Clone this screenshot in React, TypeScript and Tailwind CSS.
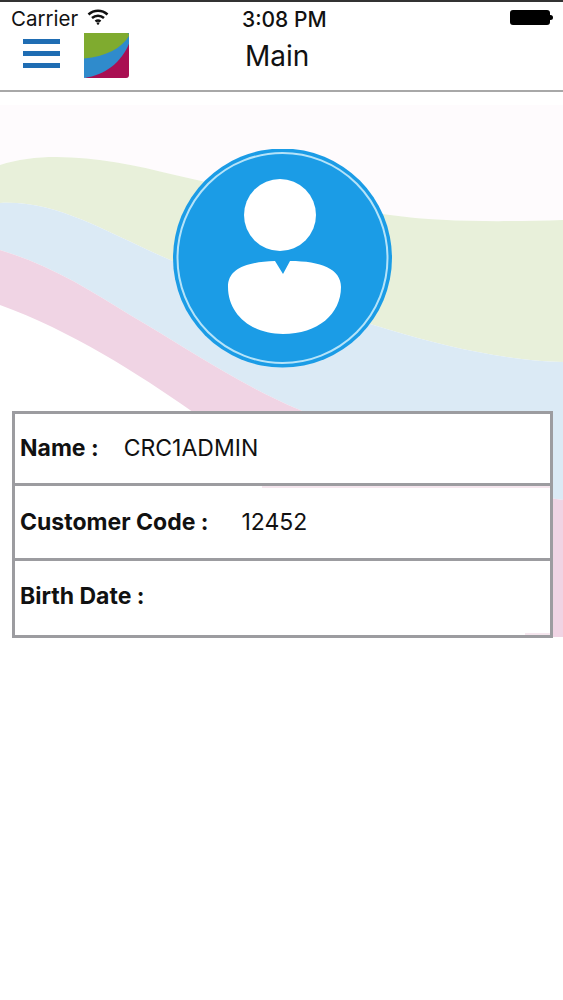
const rows = [
  { label: 'Name :', value: 'CRC1ADMIN', gap: 'ml-[25px]', height: 'h-[72px]', tint: '' },
  { label: 'Customer Code :', value: '12452', gap: 'ml-[33px]', height: 'h-[75px]', tint: 'top-0 left-[247px] right-0' },
  { label: 'Birth Date :', value: '', gap: '', height: 'h-[74px]', tint: 'bottom-0 left-[510px] right-0' },
];

const Waves = () => (
  <svg className="absolute left-0 top-0 h-full w-full" viewBox="0 0 563 1000">
    <path d="M0 105H563V220C500 222 440 222 390 215C310 204 240 190 175 175C120 161 50 148 0 165Z" fill="#fefbfd" />
    <path d="M0 165C50 148 120 161 175 175C240 190 310 204 390 215C440 222 500 222 563 220V362C500 360 440 345 390 330C310 305 240 285 175 262C110 235 60 200 0 203Z" fill="#e8f0da" />
    <path d="M0 203C60 200 110 235 175 262C240 285 310 305 390 330C440 345 500 360 563 362V500C480 490 390 450 300 410C240 385 190 350 130 315C90 290 50 265 0 250Z" fill="#dbeaf5" />
    <path d="M0 250C50 265 90 290 130 315C190 350 240 385 300 410C390 450 480 490 563 500V637H540C420 600 300 490 190 410C140 375 70 330 0 305Z" fill="#f0d4e4" />
  </svg>
);

const Avatar = () => (
  <svg className="h-[220px] w-[220px]" viewBox="0 0 220 220">
    <circle cx="109.5" cy="109" r="109.5" fill="#1b9ce6" />
    <circle cx="109.5" cy="109" r="105" fill="none" stroke="#b5e3f9" strokeWidth="2" />
    <circle cx="107" cy="66" r="36" fill="#fff" />
    <path d="M55 138C55 120 72 113 102 112L110 125L117 112C148 112 168 120 168 138C168 165 145 185 110 185C78 185 55 165 55 138Z" fill="#fff" />
  </svg>
);

const Logo = () => (
  <svg className="h-[45px] w-[45px]" viewBox="0 0 46 46">
    <rect width="46" height="46" rx="3" fill="#a90f52" />
    <path d="M0 0H46V11C38 30 22 43 0 46Z" fill="#2f8bcc" />
    <path d="M0 0H44C46 0 46 2 46 3C38 16 22 24 0 26Z" fill="#7fab2f" />
  </svg>
);

const App = () => {
  return (
    <div className="relative h-[1000px] w-[563px] overflow-hidden bg-white font-['Inter','Liberation_Sans',sans-serif] text-[#111]">
      <Waves />
      <div className="relative flex h-[92px] flex-col border-t-2 border-b-2 border-t-[#333] border-b-[#a8a8a8] bg-white">
        <div className="relative flex h-[34px] shrink-0 items-center justify-between pl-[11px] pr-[10px]">
          <div className="flex items-center gap-[9px]">
            <span className="text-[20.5px] leading-none">Carrier</span>
            <svg className="mb-[4px] h-[18px] w-[22px]" viewBox="0 0 22 18" fill="none" stroke="#111" strokeWidth="2.6">
              <path d="M1.5 6.5C7 1.5 15 1.5 20.5 6.5" />
              <path d="M5 10C8.5 7 13.5 7 17 10" />
              <path d="M8.5 13.5C10 12.3 12 12.3 13.5 13.5" />
              <circle cx="11" cy="15.5" r="1.2" fill="#111" stroke="none" />
            </svg>
          </div>
          <span className="absolute left-[242px] top-[7px] text-[21px] font-medium leading-none">3:08 PM</span>
          <div className="mb-[4px] flex items-center">
            <div className="h-[15px] w-[40px] rounded-[3px] bg-black" />
            <div className="h-[5px] w-[3px] rounded-r-full bg-black" />
          </div>
        </div>
        <div className="relative flex items-start pl-[23px]">
          <div className="mt-[3px] flex w-[37px] flex-col gap-[7px]">
            <div className="h-[5px] bg-[#1f6db3]" />
            <div className="h-[5px] bg-[#1f6db3]" />
            <div className="h-[5px] bg-[#1f6db3]" />
          </div>
          <div className="ml-[24px] mt-[-3px]"><Logo /></div>
          <span className="absolute left-[245px] top-[6px] text-[28px] leading-none">Main</span>
        </div>
      </div>
      <div className="relative flex justify-center pl-[2px] pt-[57px]">
        <Avatar />
      </div>
      <div className="relative mx-[12px] mt-[42px] w-[541px] border-[3px] border-[#9c9ca0] bg-white">
        {rows.map((row, i) => (
          <div
            key={row.label}
            className={`relative flex items-center pl-[5px] ${row.height} ${i < rows.length - 1 ? 'border-b-[3px] border-[#9c9ca0]' : 'pb-[3px]'}`}
          >
            {row.tint && <div className={`absolute h-[2px] bg-[#f5e6ee] ${row.tint}`} />}
            <span className="text-[23px] font-bold leading-none">{row.label}</span>
            {row.value && <span className={`text-[23px] leading-none ${row.gap}`}>{row.value}</span>}
          </div>
        ))}
      </div>
    </div>
  );
};

export default App;
